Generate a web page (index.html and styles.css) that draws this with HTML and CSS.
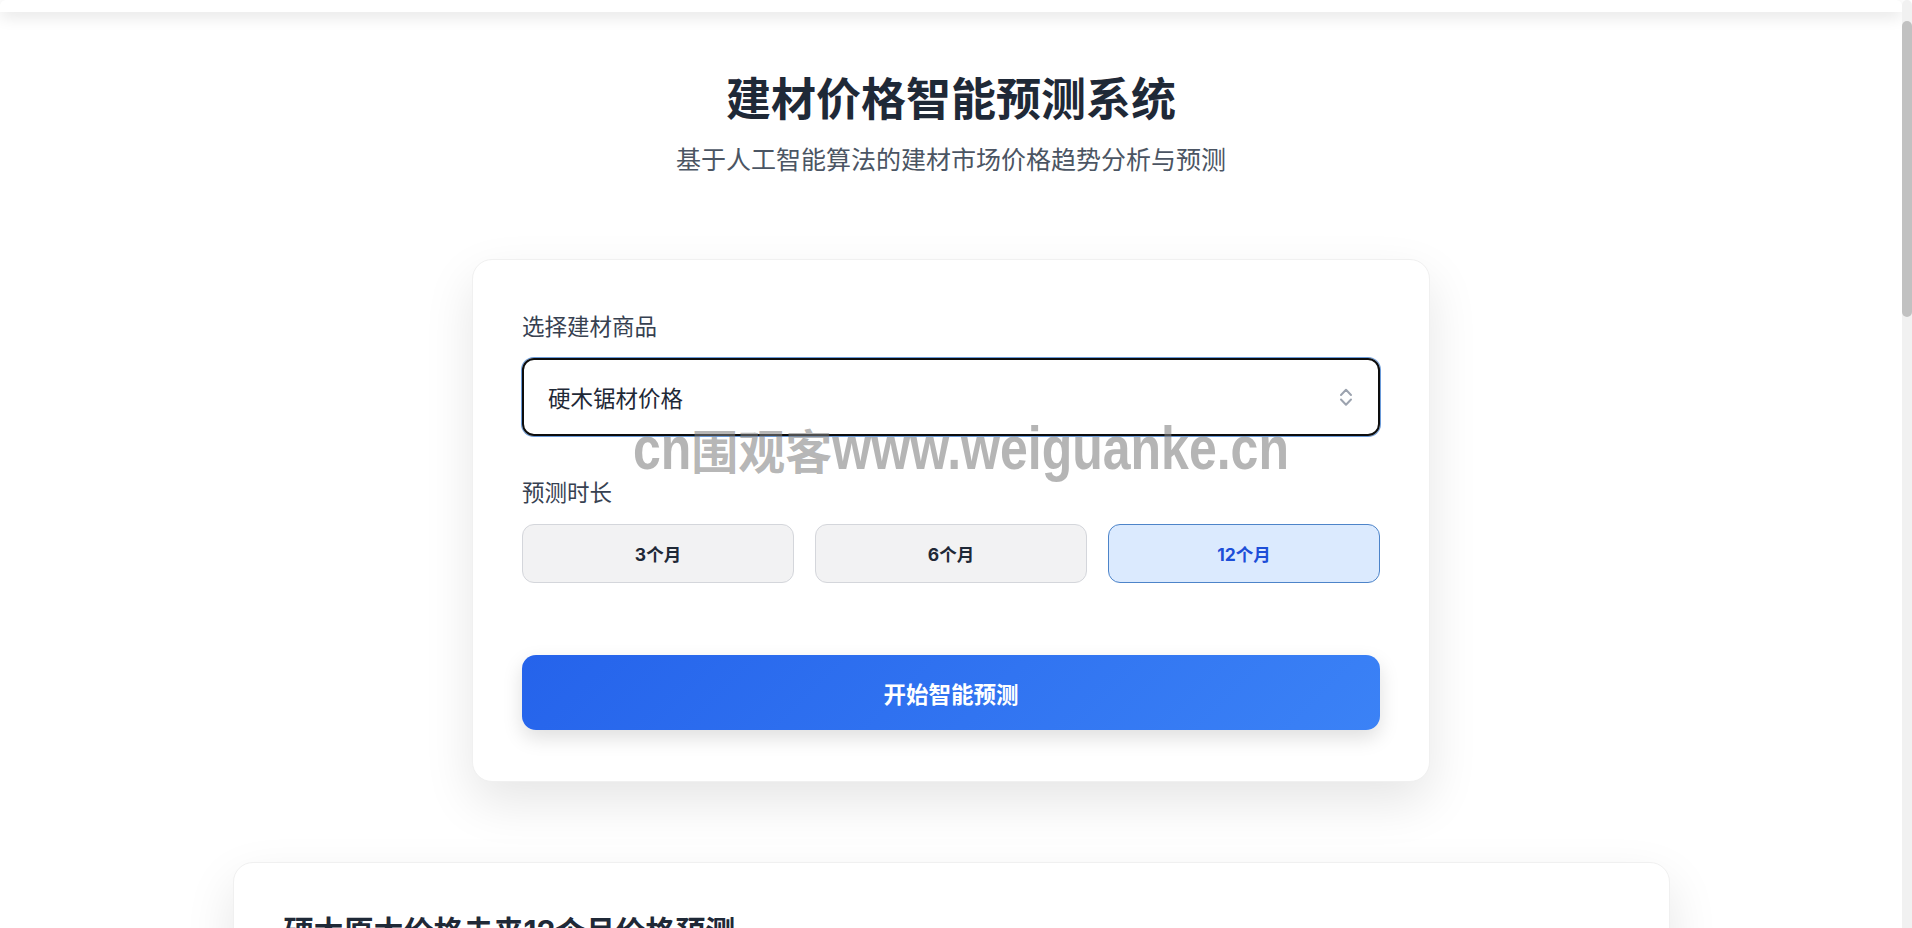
FILE: index.html
```html
<!DOCTYPE html>
<html lang="zh-CN">
<head>
<meta charset="utf-8">
<title>建材价格智能预测系统</title>
<link rel="stylesheet" href="styles.css">
</head>
<body>
<div class="viewport">
  <div class="topbar"></div>
  <main class="page">
    <header class="hero">
      <h1 class="title">建材价格智能预测系统</h1>
      <p class="subtitle">基于人工智能算法的建材市场价格趋势分析与预测</p>
    </header>

    <section class="card form-card">
      <div class="form-group">
        <div class="label">选择建材商品</div>
        <div class="select">
          <span class="select-value">硬木锯材价格</span>
          <svg class="chevrons" width="14" height="20" viewBox="0 0 14 20" aria-hidden="true">
            <polyline points="2,8 7,2.8 12,8" fill="none" stroke="#9ca3af" stroke-width="2" stroke-linecap="round" stroke-linejoin="round"/>
            <polyline points="2,12.5 7,17.7 12,12.5" fill="none" stroke="#9ca3af" stroke-width="2" stroke-linecap="round" stroke-linejoin="round"/>
          </svg>
        </div>
      </div>
      <div class="form-group">
        <div class="label">预测时长</div>
        <div class="periods">
          <button class="period">3个月</button>
          <button class="period">6个月</button>
          <button class="period active">12个月</button>
        </div>
      </div>
      <button class="submit">开始智能预测</button>
    </section>

    <section class="card result-card">
      <h2 class="result-title">硬木原木价格未来12个月价格预测</h2>
      <div class="chart"></div>
    </section>
  </main>
</div>
<div class="scrollbar"><div class="scroll-thumb"></div></div>
<div class="watermark"><span class="wm-lat">cn</span><span class="wm-cjk">围观客</span><span class="wm-lat">www.weiguanke.cn</span></div>
</body>
</html>
```
FILE: styles.css
```css
html, body {
  margin: 0;
  padding: 0;
  background: #ffffff;
}

body {
  font-family: Inter, "Noto Sans CJK SC", sans-serif;
  color: #1f2937;
}

.viewport {
  margin-right: 10px;
}

.scrollbar {
  position: fixed;
  top: 0;
  right: 0;
  width: 10px;
  height: 100vh;
  background: #f1f1f1;
  border-radius: 5px 5px 0 0;
  z-index: 5;
}

.scroll-thumb {
  margin-top: 21px;
  height: 296px;
  background: #c1c1c1;
  border-radius: 5px;
}

.topbar {
  height: 12px;
  background: #ffffff;
  border-radius: 6px 6px 0 0;
  box-shadow: 0 4px 16px rgba(0, 0, 0, 0.12);
}

.hero {
  text-align: center;
  padding-top: 61px;
}

.title {
  margin: 0;
  font-size: 45px;
  line-height: 54px;
  font-weight: 700;
  color: #1f2937;
}

.subtitle {
  margin: 14px 0 0;
  font-size: 25px;
  line-height: 38px;
  color: #4b5563;
}

.card {
  box-sizing: border-box;
  background: #ffffff;
  border: 1px solid #f0f0f0;
  border-radius: 20px;
  box-shadow: 0 20px 50px rgba(0, 0, 0, 0.10);
}

.form-card {
  width: 958px;
  margin: 80px auto 0;
  padding: 50px 49px 51px;
}

.form-group {
  margin-bottom: 40px;
}

.label {
  font-size: 22.5px;
  line-height: 34px;
  color: #374151;
  margin-bottom: 14px;
}

.select {
  box-sizing: border-box;
  height: 78px;
  border: 2px solid #0d0d0d;
  border-radius: 12px;
  box-shadow: 0 0 0 1px #6a9ad8;
  display: flex;
  align-items: center;
  justify-content: space-between;
  padding: 0 25px 0 24px;
  font-size: 22.5px;
  color: #1f2937;
}

.chevrons {
  display: block;
}

.periods {
  margin-top: 4px;
  display: grid;
  grid-template-columns: repeat(3, 1fr);
  gap: 21px;
}

.period {
  height: 59px;
  border: 1px solid #d4d6db;
  background: #f2f2f3;
  border-radius: 12px;
  font-family: Inter, "Noto Sans CJK SC", sans-serif;
  font-weight: 700;
  font-size: 17.5px;
  color: #1f2937;
}

.period.active {
  background: #dbeafe;
  border-color: #4d84c9;
  color: #1d4ed8;
}

.submit {
  display: block;
  width: 100%;
  height: 75px;
  margin-top: 72px;
  border: 0;
  border-radius: 14px;
  background: linear-gradient(135deg, #2563eb 0%, #3b82f6 100%);
  color: #ffffff;
  font-family: Inter, "Noto Sans CJK SC", sans-serif;
  font-weight: 700;
  font-size: 22.5px;
  box-shadow: 0 8px 20px rgba(0, 0, 0, 0.13);
}

.result-card {
  width: 1437px;
  margin: 80px auto 40px;
  padding: 50px;
}

.result-title {
  margin: 0 0 30px;
  font-size: 30px;
  line-height: 36px;
  font-weight: 700;
  color: #1f2937;
}

.chart {
  height: 1900px;
}

.watermark {
  position: absolute;
  left: 633px;
  top: 419px;
  white-space: nowrap;
  line-height: 60px;
  color: rgba(128, 128, 128, 0.58);
  font-weight: 700;
  pointer-events: none;
  z-index: 10;
}

.wm-lat {
  display: inline-block;
  font-family: "Liberation Sans", sans-serif;
  font-size: 50px;
  transform: scaleY(1.22);
  transform-origin: 50% 80%;
}

.wm-cjk {
  font-family: "Noto Sans CJK SC", sans-serif;
  font-size: 47px;
}
```
